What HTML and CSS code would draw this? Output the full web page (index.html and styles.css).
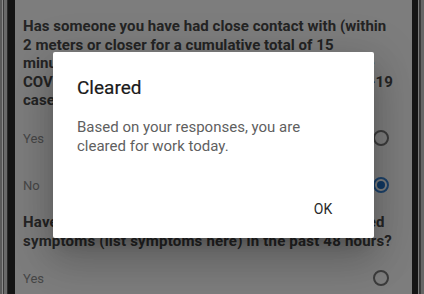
FILE: index.html
```html
<!DOCTYPE html>
<html lang="en">
<head>
<meta charset="utf-8">
<title>Cleared</title>
<link rel="stylesheet" href="styles.css">
</head>
<body>
<div class="device">
  <div class="bezel-left"></div>
  <div class="screen">
    <div class="form">
      <p class="question">Has someone you have had close contact with (within<br>2 meters or closer for a cumulative total of 15<br>minutes) been identified as a confirmed or probable<br>COVID-19 case, or a person being tested for COVID-19<br>case?</p>
      <div class="option"><span class="label">Yes</span><span class="radio"></span></div>
      <div class="option"><span class="label">No</span><span class="radio checked"></span></div>
      <p class="question q2">Have you experienced any new or unexplained listed<br>symptoms (list symptoms here) in the past 48 hours?</p>
      <div class="option last"><span class="label">Yes</span><span class="radio"></span></div>
    </div>
    <div class="scrim"></div>
    <div class="dialog">
      <h2 class="dialog-title">Cleared</h2>
      <p class="dialog-body">Based on your responses, you are cleared for work today.</p>
      <div class="dialog-actions"><span class="btn">OK</span></div>
    </div>
  </div>
  <div class="bezel-right"></div>
</div>
</body>
</html>
```

FILE: styles.css
```css
html, body {
  margin: 0;
  padding: 0;
  width: 424px;
  height: 294px;
  overflow: hidden;
  background: #141414;
}

.device {
  display: flex;
  width: 424px;
  height: 294px;
}

.bezel-left {
  width: 15px;
  flex: none;
  background: linear-gradient(to right,
    #5a5a5a 0 2px, #8a8a8a 2px 3px, #3a3a3a 3px 4px,
    #6a6a6a 4px 7px, #2a2a2a 7px 8px, #141414 8px 15px);
}

.bezel-right {
  width: 12px;
  flex: none;
  background: linear-gradient(to right,
    #141414 0 6px, #7a7a7a 6px 7px, #3a3a3a 7px 9px, #666666 9px 12px);
}

.screen {
  position: relative;
  width: 397px;
  flex: none;
  background: #ffffff;
  overflow: hidden;
  font-family: Roboto, "Noto Sans", sans-serif;
}

.form {
  padding: 17px 0 0 8px;
}

.question {
  margin: 0 0 5px 0;
  font-size: 15px;
  font-weight: 700;
  line-height: 18.6px;
  color: #4a4a4a;
  white-space: nowrap;
  letter-spacing: 0.05px;
}

.q2 {
  margin: 4px 0 4px 0;
  line-height: 19px;
  letter-spacing: 0.2px;
}

.option {
  display: flex;
  align-items: center;
  justify-content: space-between;
  height: 47px;
  padding-right: 23px;
}

.label {
  font-size: 13px;
  color: #929292;
}

.radio {
  width: 16px;
  height: 16px;
  box-sizing: border-box;
  border: 2px solid #7a7a7a;
  border-radius: 50%;
  display: flex;
  align-items: center;
  justify-content: center;
}

.radio.checked {
  border-color: #3a86d6;
}

.radio.checked::after {
  content: "";
  width: 8px;
  height: 8px;
  border-radius: 50%;
  background: #2272c8;
}

.scrim {
  position: absolute;
  inset: 0;
  background: rgba(0, 0, 0, 0.51);
}

.dialog {
  position: absolute;
  left: 38px;
  top: 52px;
  width: 321px;
  height: 186px;
  box-sizing: border-box;
  background: #ffffff;
  border-radius: 2px;
  box-shadow: 0 11px 15px -7px rgba(0,0,0,.2), 0 24px 38px 3px rgba(0,0,0,.14), 0 9px 46px 8px rgba(0,0,0,.12);
  display: flex;
  flex-direction: column;
  padding: 24px 0 0 24px;
}

.dialog-title {
  margin: 0;
  font-size: 19px;
  font-weight: 400;
  line-height: 24px;
  color: #1a1a1a;
  -webkit-text-stroke: 0.2px #1a1a1a;
}

.dialog-body {
  margin: 18px 0 0 0;
  width: 250px;
  font-size: 15px;
  line-height: 19px;
  color: #5f5f5f;
}

.dialog-actions {
  margin-top: auto;
  display: flex;
  justify-content: flex-end;
  padding: 0 19px 11px 0;
}

.btn {
  min-width: 64px;
  height: 36px;
  display: flex;
  align-items: center;
  justify-content: center;
  font-size: 14px;
  font-weight: 400;
  color: #2a2a2a;
}
```
